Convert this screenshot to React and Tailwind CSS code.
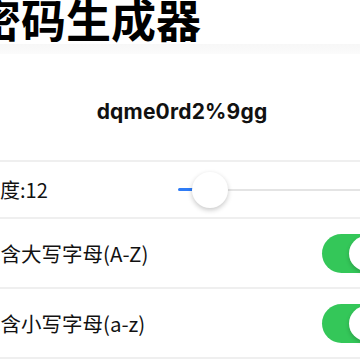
export default function App() {
  const cjk = { fontFamily: '"Noto Sans CJK SC", "Noto Sans", sans-serif' };
  return (
    <div className="w-[360px] h-[360px] overflow-hidden bg-white" style={cjk}>
      <div className="ml-[-20px] w-[420px] flex flex-col">
        {/* title */}
        <div className="h-[44px] flex items-start">
          <div className="ml-[-4px] mt-[-4px] text-[45px] leading-[46px] font-bold text-black">
            密码生成器
          </div>
        </div>
        <div className="h-[10px] bg-gradient-to-b from-[#f7f7f7] to-[#fbfbfb]" />
        {/* password */}
        <div className="h-[106px] flex justify-center pr-[16px]">
          <div
            className="mt-[46px] text-[21px] leading-[24px] font-bold text-[#111] tracking-[0.2px]"
            style={{ fontFamily: 'Inter, "Noto Sans", sans-serif' }}
          >
            dqme0rd2%9gg
          </div>
        </div>
        <div className="h-[2px] bg-[#efefef]" />
        {/* slider */}
        <div className="h-[55px] flex items-center">
          <div className="w-[198px] text-[20px] leading-[24px] text-[#111]">长度:12</div>
          <div className="relative flex-1 h-[40px]">
            <div className="absolute left-0 top-[18px] w-[20px] h-[3px] bg-[#2f7cf6] rounded-full" />
            <div className="absolute left-[20px] right-0 top-[19px] h-[2px] bg-[#e4e4e4]" />
            <div className="absolute left-[14px] top-[2px] w-[36px] h-[36px] rounded-full bg-white shadow-[0_2px_5px_rgba(0,0,0,0.22)]" />
          </div>
        </div>
        <div className="h-[2px] bg-[#efefef]" />
        {/* toggle 1 */}
        <div className="h-[68px] flex items-center justify-between pr-[14px]">
          <div className="text-[20.5px] leading-[24px] text-[#111]">包含大写字母(A-Z)</div>
          <div className="w-[64px] h-[39px] rounded-full bg-[#34c759] flex items-center justify-end pr-[2px]">
            <div className="w-[35px] h-[35px] rounded-full bg-white shadow-[0_2px_4px_rgba(0,0,0,0.2)]" />
          </div>
        </div>
        <div className="h-[2px] bg-[#efefef]" />
        {/* toggle 2 */}
        <div className="h-[68px] flex items-center justify-between pr-[14px]">
          <div className="text-[20.5px] leading-[24px] text-[#111]">包含小写字母(a-z)</div>
          <div className="w-[64px] h-[39px] rounded-full bg-[#34c759] flex items-center justify-end pr-[2px]">
            <div className="w-[35px] h-[35px] rounded-full bg-white shadow-[0_2px_4px_rgba(0,0,0,0.2)]" />
          </div>
        </div>
        <div className="h-[2px] bg-[#efefef]" />
      </div>
    </div>
  );
}
